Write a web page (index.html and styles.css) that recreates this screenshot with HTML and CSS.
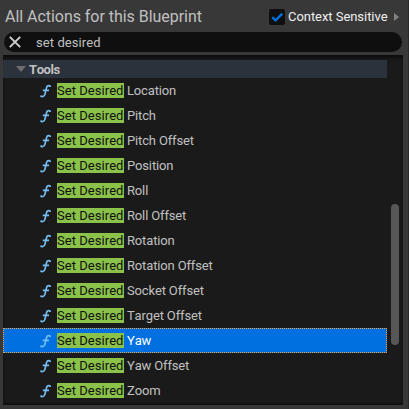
FILE: index.html
```
<!DOCTYPE html>
<html lang="en">
<head>
<meta charset="utf-8">
<title>Blueprint Actions</title>
<link rel="stylesheet" href="styles.css">
</head>
<body>
<main class="panel">
  <header class="header">
    <h1 class="title">All Actions for this Blueprint</h1>
    <div class="context">
      <span class="checkbox"><svg width="16" height="16" viewBox="0 0 16 16"><path d="M3.3 8.2l3.2 3.2 6.8-6.8" fill="none" stroke="#0070e0" stroke-width="2.4"/></svg></span>
      <span class="context-label">Context Sensitive</span>
      <svg class="expand" width="5" height="8" viewBox="0 0 5 8"><path d="M0 0l5 4-5 4z" fill="#828282"/></svg>
    </div>
  </header>
  <div class="search">
    <svg width="12" height="12" viewBox="0 0 12 12"><path d="M.8.8l10.4 10.4M11.2.8L.8 11.2" stroke="#d0d0d0" stroke-width="1.9"/></svg>
    <span class="query">set desired</span>
  </div>
  <section class="list">
    <div class="rows" id="rows">
      <div class="category"><svg width="10" height="6" viewBox="0 0 10 6"><path d="M0 0h10L5 6z" fill="#6c6d6f"/></svg><span>Tools</span></div>
    </div>
    <div class="track"><div class="thumb"></div></div>
  </section>
</main>
<script src="script.js"></script>
</body>
</html>
```
FILE: styles.css
```
* { box-sizing: border-box; }
body {
  margin: 0;
  width: 409px;
  height: 409px;
  overflow: hidden;
  background: #383838;
  font-family: Roboto, sans-serif;
  font-size: 13px;
  font-kerning: none;
  color: #c0c0c0;
}
.panel {
  height: 409px;
  padding: 0 5px 4px 3px;
  border-right: 1px solid #2a2a2a;
  display: flex;
  flex-direction: column;
}
.header {
  height: 32px;
  padding: 1px 4px 0 2px;
  display: flex;
  align-items: center;
  justify-content: space-between;
  flex: none;
}
.title {
  margin: 0;
  font-size: 16px;
  font-weight: 400;
  line-height: 30px;
  letter-spacing: -0.04px;
  white-space: nowrap;
}
.context { display: flex; align-items: center; color: #f0f0f0; white-space: nowrap; }
.checkbox { width: 16px; height: 16px; border-radius: 2px; background: #0f0f0f; margin-right: 3px; }
.checkbox svg, .expand { display: block; }
.context-label { width: 100px; margin-right: 6px; letter-spacing: -0.05px; }
.search {
  height: 20px;
  margin: 0 1px 3px 1px;
  padding-left: 5px;
  border-radius: 10px;
  background: #0f0f0f;
  display: flex;
  align-items: center;
  flex: none;
}
.query { margin-left: 15px; letter-spacing: 0.08px; }
.list {
  height: 350px;
  padding-top: 5px;
  background: #1a1a1a;
  box-shadow: inset 0 4px 4px -2px #080808, inset 0 -3px 3px -2px #0c0c0c;
  display: flex;
}
.rows { width: 384px; }
.category {
  height: 18px;
  padding-left: 13px;
  background: #2b323b;
  display: flex;
  align-items: center;
  font-weight: 700;
  letter-spacing: -0.4px;
}
.category span { margin-left: 3px; }
.row {
  height: 25px;
  padding-left: 37px;
  display: flex;
  align-items: center;
  white-space: nowrap;
}
.row svg { margin-right: 6px; flex: none; }
.row mark { width: 67px; height: 15px; line-height: 15px; background: #8bc24a; color: #101010; letter-spacing: 0.04px; }
.row .name { margin-left: 3px; letter-spacing: -0.15px; }
.row.selected {
  background: #0070e0;
  color: #fff;
  outline: 1px dotted #f5a033;
  outline-offset: -1px;
}
.track { width: 16px; padding: 144px 4px 0; }
.thumb { width: 8px; height: 141px; border-radius: 4px; background: #575757; }
```
FILE: script.js
```
const names = ["Location", "Pitch", "Pitch Offset", "Position", "Roll", "Roll Offset", "Rotation",
  "Rotation Offset", "Socket Offset", "Target Offset", "Yaw", "Yaw Offset", "Zoom"];
const icon = '<svg width="11" height="14" viewBox="0 0 11 14"><path d="M10.4 3C10.3 1.3 7.3 .9 6.6 3.4L4.9 10.4C4.3 12.8 1.3 13.1 .8 11.6M2.8 6.3H9" fill="none" stroke="#73bdf2" stroke-width="1.7"/></svg>';
document.getElementById("rows").insertAdjacentHTML("beforeend", names.map(name =>
  `<div class="row${name === "Yaw" ? " selected" : ""}">${icon}<mark>Set Desired</mark><span class="name">${name}</span></div>`
).join(""));
```
